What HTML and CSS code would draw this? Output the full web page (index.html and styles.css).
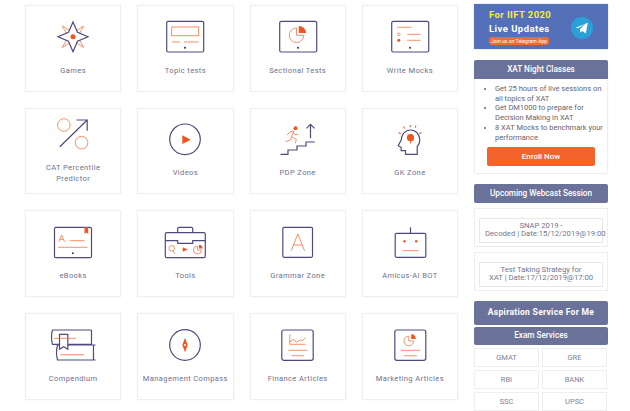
FILE: index.html
```html
<!DOCTYPE html>
<html lang="en">
<head>
<meta charset="utf-8">
<title>Dashboard</title>
<link rel="stylesheet" href="styles.css">
</head>
<body>
<div class="page">
<main class="tiles">
  <a class="tile"><svg class="ico" viewBox="0 0 48 46"><path class="o" d="M20.500 17.500 13.300 13l4.200 7.500M27.500 17.500 34.700 13l-4.200 7.500M20.500 30 13.300 34.500l4.200-7.500M27.500 30l7.200 4.500-4.200-7.500"/><path class="d" d="M24 9l4.500 10.200L39 23.700l-10.500 4.500L24 38.700l-4.500-10.500L9 23.700l10.500-4.500z"/><circle class="f" cx="24" cy="23.700" r="2.500"/></svg><span class="name">Games</span></a>
  <a class="tile"><svg class="ico" viewBox="0 0 48 46"><rect class="d" x="5.700" y="8.300" width="37" height="30.700" rx="1.500"/><rect class="o" x="10.700" y="14" width="27" height="8.700"/><path class="o" d="M10.700 29H19M23 29h14.700"/><circle class="k" cx="24" cy="34.700" r="1"/></svg><span class="name">Topic tests</span></a>
  <a class="tile"><svg class="ico" viewBox="0 0 48 46"><rect class="d" x="5.700" y="8.300" width="37" height="30.700" rx="1.500"/><path class="o" d="M22.500 15a7.300 7.300 0 1 0 7.300 7.300h-7.300z"/><path class="f" d="M24.800 13a7.500 7.500 0 0 1 7.400 7h-7.400z"/><circle class="k" cx="24" cy="34.700" r="1"/></svg><span class="name">Sectional Tests</span></a>
  <a class="tile"><svg class="ico" viewBox="0 0 48 46"><rect class="d" x="5.700" y="8.300" width="37" height="30.700" rx="1.500"/><path class="o" d="M11.200 14.300h14M21.200 21.300h13.300M21.200 27.300h13.300"/><circle class="o" cx="12.800" cy="21.300" r="1.300"/><circle class="f" cx="12.800" cy="27.300" r="1.500"/><circle class="k" cx="24" cy="34.700" r="1"/></svg><span class="name">Write Mocks</span></a>

  <a class="tile"><svg class="ico" viewBox="0 0 48 46"><circle class="o" cx="14.800" cy="9" r="6.300"/><circle class="o" cx="32.500" cy="26.700" r="6.300"/><path class="d" d="M10.800 30.700 38.200 4M27.500 4h10.700v10.700"/></svg><span class="name">CAT Percentile<br>Predictor</span></a>
  <a class="tile"><svg class="ico" viewBox="0 0 48 46"><circle class="d" cx="24" cy="23.300" r="15.300"/><path class="f" d="M21.300 19.300 29.700 23.700 21.300 28z"/></svg><span class="name">Videos</span></a>
  <a class="tile"><svg class="ico" viewBox="0 0 48 46"><path class="d" d="M6.500 38.300H14V34h9v-4h9v-4h8.800M36.500 22.300v-14M32.500 12.300l4-4 4 4"/><circle class="f" cx="21.500" cy="12.300" r="2"/><path class="o" d="M13.200 19l2.800-3.200 3.800-.8-2.300 5.700 4.700 2.600-.7 4M19.500 16.500l1.500 2 3.200-.2M17.500 20.700 16.500 24l-5 1.700"/></svg><span class="name">PDP Zone</span></a>
  <a class="tile"><svg class="ico" viewBox="0 0 48 46"><path class="d" d="M31.200 38.300v-7.600c1.700-2 2.600-4.200 2.600-6.700 0-5.500-4-10-9.300-10-5.200 0-9.300 4.300-9.300 10l-3 5.700 3 1.600v3.400h4.300v3.600z"/><circle class="f" cx="24.500" cy="21.700" r="3.600"/><path class="o strong" d="M24.500 24v3.500M12.500 16.500l2.200 1.200M17.500 10.500l1 2M24.200 9v2.300M30 9.500l-.8 2.200M35.500 16.500l-2.200 1.200"/></svg><span class="name">GK Zone</span></a>

  <a class="tile"><svg class="ico" viewBox="0 0 48 46"><rect class="d" x="5.500" y="9.300" width="37" height="30.400" rx="1.500"/><path class="o" d="M9.800 23.700 12.600 17l2.900 6.700M10.800 21.400h3.700M20.800 22.700h14.700M9.200 29.300h29.300"/><path class="f" d="M35.500 9.300h3.700V16l-1.850-1.500L35.500 16z"/><circle class="k" cx="23.800" cy="35.300" r="1"/></svg><span class="name">eBooks</span></a>
  <a class="tile"><svg class="ico" viewBox="0 0 48 46"><rect class="d" x="4.300" y="14.700" width="40" height="25" rx="1.500"/><path class="d" d="M16.700 14.700v-4.200q0-1.200 1.200-1.200h12.600q1.200 0 1.200 1.200v4.200M4.300 22.700h12.400v2.600h15v-2.600h12.600"/><circle class="o" cx="10.700" cy="30.300" r="2.800"/><path class="o" d="M12 32.800l1.700 2.900"/><path class="f" d="M21.700 29.300l5 2.200-5 2.200z"/><path class="o" d="M36.500 28a4 4 0 1 0 4 4h-4z"/><path class="f" d="M38 26.700a4 4 0 0 1 3.700 3.700H38z"/></svg><span class="name">Tools</span></a>
  <a class="tile"><svg class="ico" viewBox="0 0 48 46"><rect class="d" x="8.800" y="9.300" width="29.700" height="30" rx="1.200"/><path class="o" d="M17.200 32.700 23.800 16l6.700 16.700M19.500 27H28.500"/></svg><span class="name">Grammar Zone</span></a>
  <a class="tile"><svg class="ico" viewBox="0 0 48 46"><rect class="d" x="9.200" y="15.300" width="30.600" height="24" rx="1.200"/><path class="d" d="M24.500 9.300v6"/><circle class="f" cx="18.500" cy="23.300" r="1.200"/><circle class="f" cx="30.200" cy="23.300" r="1.200"/><path class="o" d="M16.500 32.700h16"/></svg><span class="name">Amicus-AI BOT</span></a>

  <a class="tile"><svg class="ico" viewBox="0 0 48 46"><path class="d" d="M42.500 9H3.500Q1.500 16 3.500 23.300H42.500V9M46.500 24H8.500Q6.500 31.500 8.500 39H46.500M44.500 24V39"/><path class="o" d="M4.800 17.300h22.400"/><path class="o thick" d="M11.500 33.700h23.300"/><path class="d paper" d="M10.500 13.300h8.300v15l-4.150-2.500-4.150 2.500z"/><path class="o" d="M10.500 17.300h8.300"/></svg><span class="name">Compendium</span></a>
  <a class="tile"><svg class="ico" viewBox="0 0 48 46"><circle class="d" cx="24" cy="24" r="15.300"/><path class="f" d="M24 16.700 26.700 24 24 31.300 21.300 24z"/><circle class="w" cx="24" cy="24" r="1"/></svg><span class="name">Management Compass</span></a>
  <a class="tile"><svg class="ico" viewBox="0 0 48 46"><rect class="d" x="7.800" y="9" width="31.400" height="30.300" rx="2"/><path class="o" d="M15.800 13.300v10h15.700M15.800 20.700l4-2.400 2.400 3 4.300-2.300 1.700.7 3.300-3M14.200 29.300h19M17.500 34.700h12.300"/></svg><span class="name">Finance Articles</span></a>
  <a class="tile"><svg class="ico" viewBox="0 0 48 46"><rect class="d" x="8.800" y="9" width="31" height="30.300" rx="2"/><path class="o" d="M22.800 15.200a4.800 4.800 0 1 0 4.800 4.800h-4.800z"/><path class="f" d="M25.200 13.300a4.800 4.800 0 0 1 4.600 4.700h-4.600z"/><path class="o" d="M14.500 29.300h19.700M17.800 34.700h13"/></svg><span class="name">Marketing Articles</span></a>
</main>

<aside class="side">
  <section class="banner">
    <div class="banner-text">
      <div class="b-year">For IIFT 2020</div>
      <div class="b-live">Live Updates</div>
      <div class="b-pill">Join us on Telegram App</div>
    </div>
    <svg class="tg" viewBox="0 0 24 24"><circle class="tg-bg" cx="12" cy="12" r="12"/><path class="tg-plane" d="M5 11.800 18.300 6.200 16.200 18l-4-2.800-2 2-.6-3.800 6.200-6.100-8 5z"/></svg>
  </section>

  <section class="card">
    <h3 class="head">XAT Night Classes</h3>
    <ul class="points">
      <li>Get 25 hours of live sessions on all topics of XAT</li>
      <li>Get DM1000 to prepare for Decision Making in XAT</li>
      <li>8 XAT Mocks to benchmark your performance</li>
    </ul>
    <a class="enroll">Enroll Now</a>
  </section>

  <h3 class="head head-solo">Upcoming Webcast Session</h3>
  <div class="cast"><div class="cast-in">SNAP 2019 -<br><span class="nowrap">Decoded | Date:15/12/2019@19:00</span></div></div>
  <div class="cast"><div class="cast-in">Test Taking Strategy for<br><span class="nowrap">XAT | Date:17/12/2019@17:00</span></div></div>

  <h3 class="head head-big">Aspiration Service For Me</h3>
  <h3 class="head head-exam">Exam Services</h3>
  <div class="exams">
    <a class="exam">GMAT</a><a class="exam">GRE</a>
    <a class="exam">RBI</a><a class="exam">BANK</a>
    <a class="exam">SSC</a><a class="exam">UPSC</a>
  </div>
</aside>
</div>
</body>
</html>
```
FILE: styles.css
```css
* { box-sizing: border-box; }
html, body { margin: 0; height: 411px; overflow: hidden; background: #fff; }
body { font-family: Roboto, "Liberation Sans", sans-serif; color: #6e7190; }
.page { display: flex; align-items: flex-start; padding-left: 25px; }

.tiles {
  width: 433px;
  margin-top: 5px;
  display: grid;
  grid-template-columns: repeat(4, 1fr);
  grid-auto-rows: 86.7px;
  gap: 16px;
}
.tile {
  display: flex;
  flex-direction: column;
  align-items: center;
  padding-top: 7px;
  border: 1px solid #efeff1;
  box-shadow: 0 0 2px rgba(0,0,0,.05);
  background: #fff;
}
.ico { width: 48px; height: 46px; overflow: visible; flex: none; }
.name {
  height: 22px;
  display: flex;
  align-items: center;
  text-align: center;
  font-size: 7.500px;
  line-height: 11px;
  letter-spacing: .4px;
  white-space: nowrap;
  color: #6e7190;
}
.d, .o { fill: none; stroke-linejoin: miter; }
.d { stroke: #4f4a7e; stroke-width: 1.2; }
.o { stroke: #f5855a; stroke-width: .9; }
.o.strong { stroke: #f26030; stroke-width: 1.1; }
.o.thick { stroke-width: 1.3; stroke: #f7a283; }
.f { fill: #f1551f; }
.k { fill: #35306a; }
.w { fill: #fff; }
.d.paper { fill: #fff; }

.side { width: 134px; margin-left: 16px; margin-top: 4px; }
.banner {
  height: 45px;
  background: #5470b9;
  display: flex;
  justify-content: space-between;
  align-items: center;
  padding: 0 15px;
  box-shadow: 0 0 1px #9aa6c9;
}
.banner-text { display: flex; flex-direction: column; align-items: flex-start; }
.b-year { color: #f4ee3a; font-size: 9.500px; line-height: 11px; font-weight: 700; letter-spacing: .4px; }
.b-live { color: #fff; font-size: 9.500px; line-height: 13px; font-weight: 700; margin-top: 2px; letter-spacing: .45px; }
.b-pill {
  margin-top: 2px;
  background: #f26a2e;
  color: #fff;
  font-size: 5.100px;
  line-height: 8px;
  padding: 0 2px;
  border-radius: 3px;
  white-space: nowrap;
}
.tg { width: 22px; height: 22px; flex: none; margin-top: 2px; }
.tg-bg { fill: #2a9fd8; }
.tg-plane { fill: #fff; }

.head {
  margin: 0;
  background: #6b7299;
  color: #fff;
  font-size: 8.200px;
  font-weight: 500;
  text-align: center;
  border-radius: 2px;
  height: 19px;
  line-height: 18px;
}
.card {
  margin-top: 11px;
  height: 114px;
  border: 1px solid #eeeeef;
  border-radius: 2px;
  box-shadow: 0 0 2px rgba(0,0,0,.05);
}
.card .head { margin: -1px -1px 0; border-radius: 2px 2px 0 0; }
.points {
  margin: 5px 0 0;
  padding: 0 0 0 20px;
  list-style: disc;
  font-size: 7.500px;
  line-height: 9.700px;
  color: #65666f;
}
.enroll {
  display: block;
  margin: 5px 12px 0;
  height: 19px;
  background: #f4642a;
  color: #fff;
  font-size: 8px;
  font-weight: 500;
  line-height: 19px;
  text-align: center;
  border-radius: 2px;
}
.head-solo { margin-top: 10px; }
.cast {
  margin-top: 5px;
  height: 39px;
  border: 1px solid #eeeeef;
  padding: 9px 4px 0;
}
.cast-in {
  height: 25px;
  border: 1px solid #e8e8ea;
  padding: 3px 5px 0;
  font-size: 7.700px;
  line-height: 8px;
  text-align: center;
  color: #74768f;
}
.nowrap { white-space: nowrap; }
.head-big {
  margin-top: 10px;
  height: 24px;
  line-height: 23px;
  font-size: 8.500px;
  font-weight: 700;
  letter-spacing: .3px;
}
.head-exam { margin-top: 2px; height: 18px; line-height: 17px; }
.exams {
  margin-top: 3px;
  display: grid;
  grid-template-columns: 65px 65px;
  grid-auto-rows: 19px;
  gap: 3px;
}
.exam {
  border: 1px solid #eeeeef;
  font-size: 7.500px;
  line-height: 17px;
  text-align: center;
  color: #80829a;
}
```
